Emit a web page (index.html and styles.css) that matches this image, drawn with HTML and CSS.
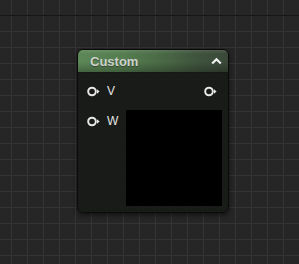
FILE: index.html
```html
<!DOCTYPE html>
<html lang="en">

<head>
    <meta charset="UTF-8">
    <title>Custom Node</title>
    <link rel="stylesheet" href="styles.css">
</head>

<body>
    <div class="graph">
        <div class="node">
            <div class="node-header">
                <span class="node-title">Custom</span>
                <svg class="collapse" width="11" height="8" viewBox="0 0 11 8">
                    <polyline points="1.2,6.5 5.5,2.2 9.8,6.5" fill="none" stroke="#f2f2f2" stroke-width="2.2" />
                </svg>
            </div>
            <div class="node-body">
                <div class="row row-first">
                    <div class="pin">
                        <svg width="13" height="11" viewBox="0 0 13 11">
                            <circle cx="5" cy="5.5" r="3.8" fill="none" stroke="#e8e8e8" stroke-width="2" />
                            <polygon points="10,3.3 12.6,5.5 10,7.7" fill="#e8e8e8" />
                        </svg>
                        <span class="pin-label">V</span>
                    </div>
                    <div class="pin">
                        <svg width="13" height="11" viewBox="0 0 13 11">
                            <circle cx="5" cy="5.5" r="3.8" fill="none" stroke="#e8e8e8" stroke-width="2" />
                            <polygon points="10,3.3 12.6,5.5 10,7.7" fill="#e8e8e8" />
                        </svg>
                    </div>
                </div>
                <div class="row row-second">
                    <div class="pin pin-w">
                        <svg width="13" height="11" viewBox="0 0 13 11">
                            <circle cx="5" cy="5.5" r="3.8" fill="none" stroke="#e8e8e8" stroke-width="2" />
                            <polygon points="10,3.3 12.6,5.5 10,7.7" fill="#e8e8e8" />
                        </svg>
                        <span class="pin-label">W</span>
                    </div>
                    <div class="preview"></div>
                </div>
            </div>
        </div>
    </div>
</body>

</html>
```

FILE: styles.css
```css
body {
    margin: 0;
    width: 299px;
    height: 264px;
    overflow: hidden;
    font-family: "Liberation Sans", Arial, sans-serif;
    background-color: #262626;
    background-image:
        linear-gradient(to bottom, transparent 15px, #161616 15px, #161616 16px, transparent 16px),
        linear-gradient(to right, #343434 1px, transparent 1px),
        linear-gradient(to bottom, #343434 1px, transparent 1px);
    background-size: 299px 264px, 16px 16px, 16px 16px;
    background-position: 0 0, 11px 0, 0 15px;
    background-repeat: no-repeat, repeat, repeat;
}

.graph {
    padding: 49px 0 0 77px;
}

.node {
    width: 150px;
    height: 162px;
    border: 1px solid #0b0b0b;
    border-radius: 6px;
    background-color: rgba(24, 26, 23, 0.92);
    box-shadow: 0 2px 5px rgba(0, 0, 0, 0.55);
    display: flex;
    flex-direction: column;
}

.node-header {
    height: 22px;
    border-radius: 5px 5px 0 0;
    background:
        linear-gradient(to bottom, rgba(255, 255, 255, 0.1) 0, rgba(255, 255, 255, 0) 4px, rgba(0, 0, 0, 0) 12px, rgba(0, 0, 0, 0.25) 22px),
        linear-gradient(to right, #5c8757 0%, #557d50 30%, #4a6a46 55%, #3f533d 80%, #3a4838 100%);
    display: flex;
    align-items: center;
    justify-content: space-between;
    padding: 0 6px 0 12px;
    border-bottom: 1px solid #161816;
}

.node-title {
    color: #cdd2cb;
    font-size: 13px;
    font-weight: bold;
    text-shadow: 0 1px 1px rgba(0, 0, 0, 0.4);
}

.collapse {
    margin-top: -1px;
}

.node-body {
    flex: 1;
    padding: 9px 6px 6px 9px;
    display: flex;
    flex-direction: column;
    gap: 10px;
}

.row {
    display: flex;
}

.row-first {
    height: 18px;
    align-items: center;
    justify-content: space-between;
    padding-right: 5px;
}

.row-second {
    flex: 1;
    justify-content: space-between;
    align-items: flex-start;
}

.pin {
    display: flex;
    align-items: center;
    height: 18px;
}

.pin svg {
    display: block;
}

.pin-w {
    margin-top: 2px;
}

.pin-label {
    color: #e6e6e6;
    font-size: 12px;
    margin-left: 7px;
}

.preview {
    width: 96px;
    height: 96px;
    background-color: #000;
}
```
